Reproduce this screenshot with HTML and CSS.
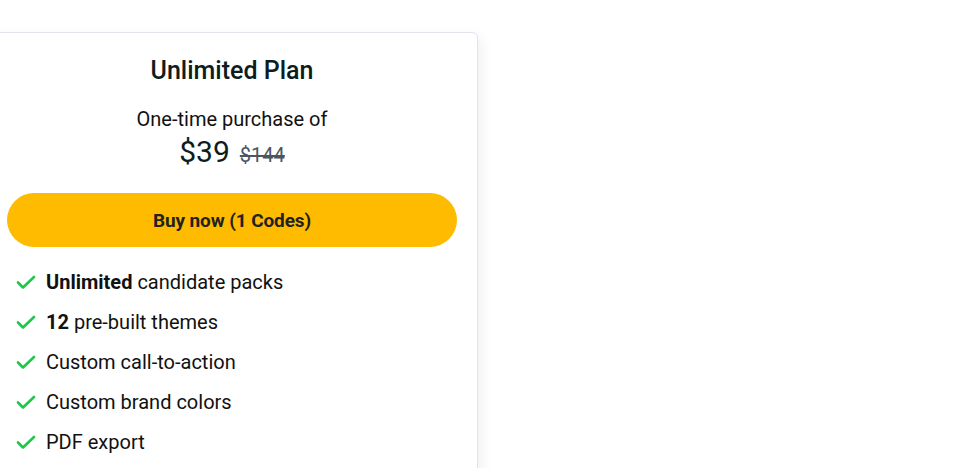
FILE: index.html
```html
<!DOCTYPE html>
<html>
<head>
<meta charset="utf-8">
<link rel="stylesheet" href="styles.css">
</head>
<body>
<div class="card">
  <h2 class="title">Unlimited Plan</h2>
  <p class="sub">One-time purchase of</p>
  <div class="price"><span class="now">$39</span><span class="old">$144</span></div>
  <button class="buy">Buy now (1 Codes)</button>
  <ul class="features">
    <li><svg class="check" viewBox="0 0 20 20"><path d="M2 10.5l5 5L18 5"/></svg><span><b>Unlimited</b> candidate packs</span></li>
    <li><svg class="check" viewBox="0 0 20 20"><path d="M2 10.5l5 5L18 5"/></svg><span><b>12</b> pre-built themes</span></li>
    <li><svg class="check" viewBox="0 0 20 20"><path d="M2 10.5l5 5L18 5"/></svg><span>Custom call-to-action</span></li>
    <li><svg class="check" viewBox="0 0 20 20"><path d="M2 10.5l5 5L18 5"/></svg><span>Custom brand colors</span></li>
    <li><svg class="check" viewBox="0 0 20 20"><path d="M2 10.5l5 5L18 5"/></svg><span>PDF export</span></li>
  </ul>
</div>
</body>
</html>
```
FILE: styles.css
```css
html, body {
  margin: 0;
  padding: 0;
  background: #ffffff;
  font-family: Roboto, "Liberation Sans", sans-serif;
  overflow: hidden;
  height: 468px;
}
.card {
  margin-top: 32px;
  margin-left: -14px;
  width: 450px;
  padding: 24px 20px 40px 20px;
  border: 1px solid #e2e1ec;
  border-radius: 6px;
  box-shadow: 4px 4px 14px rgba(0, 0, 0, 0.06);
  background: #fff;
}
.title {
  margin: 0;
  text-align: center;
  font-size: 25px;
  line-height: 28px;
  font-weight: 500;
  color: #0e1c1c;
}
.sub {
  margin: 21px 0 0 0;
  text-align: center;
  font-size: 20px;
  line-height: 26px;
  color: #111;
}
.price {
  margin-top: 2px;
  display: flex;
  justify-content: center;
  align-items: baseline;
  gap: 10px;
  line-height: 36px;
}
.now {
  font-size: 30px;
  color: #0e1c1c;
}
.old {
  font-size: 20px;
  color: #4b5563;
  text-decoration: line-through;
}
.buy {
  display: block;
  margin-top: 20px;
  width: 100%;
  height: 54px;
  border: none;
  border-radius: 27px;
  background: #ffbb00;
  font-family: Roboto, "Liberation Sans", sans-serif;
  font-size: 19px;
  font-weight: 700;
  color: #222;
  letter-spacing: -0.1px;
}
.features {
  list-style: none;
  margin: 15px 0 0 0;
  padding: 0 0 0 9px;
}
.features li {
  display: flex;
  align-items: center;
  height: 40px;
  font-size: 20px;
  color: #111;
}
.features b {
  font-weight: 700;
}
.check {
  width: 20px;
  height: 20px;
  margin-right: 10px;
  fill: none;
  stroke: #1fc64a;
  stroke-width: 2.6;
  stroke-linecap: round;
  stroke-linejoin: round;
}
```
